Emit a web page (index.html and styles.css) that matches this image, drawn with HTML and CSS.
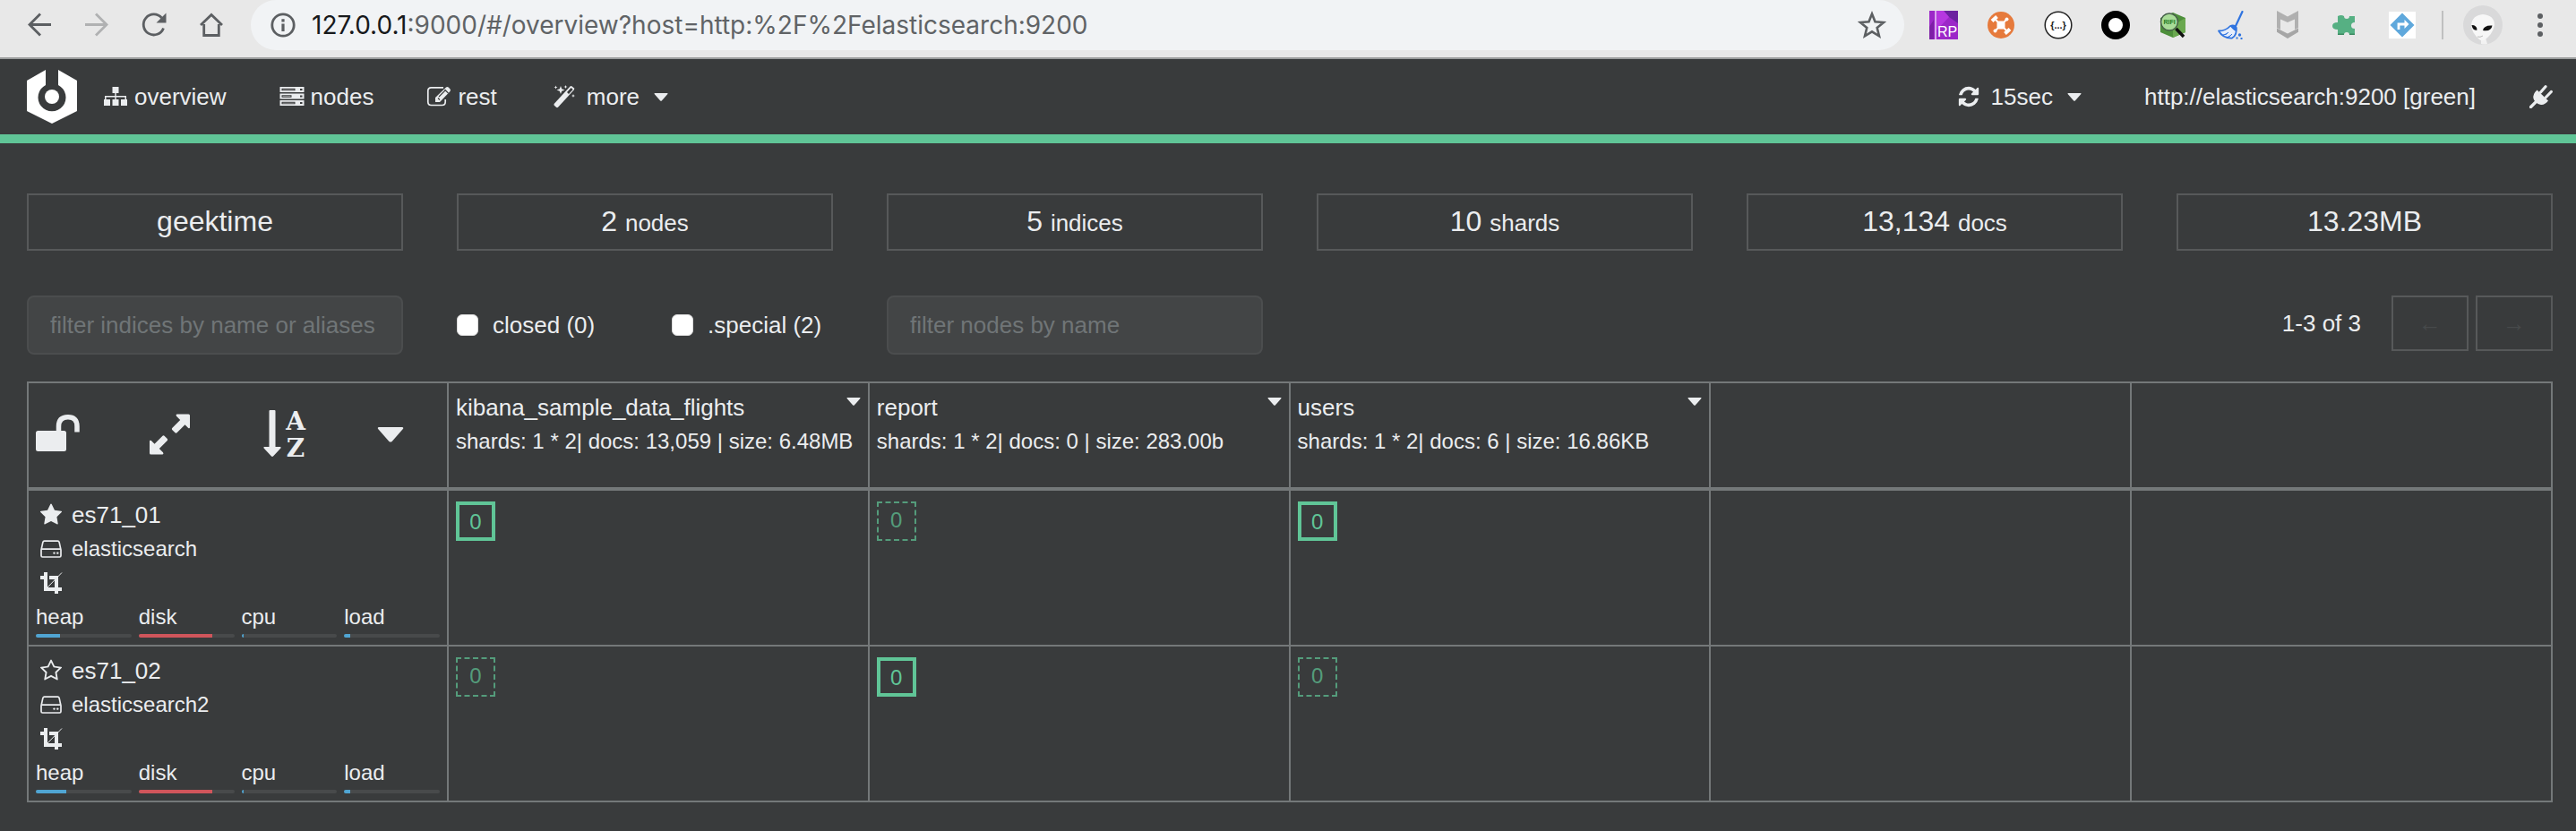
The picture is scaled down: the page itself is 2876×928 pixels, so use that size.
FILE: index.html
```html
<!DOCTYPE html>
<html lang="en">
<head>
<meta charset="utf-8">
<title>cerebro - overview</title>
<link rel="stylesheet" href="styles.css">
</head>
<body>
<svg class="sprite" aria-hidden="true">
  <symbol id="star" viewBox="0 0 1792 1792"><path d="M1728 647q0 22-26 48l-363 354 86 500q1 7 1 20 0 21-10.500 35.500t-30.500 14.500q-19 0-40-12l-449-236-449 236q-22 12-40 12-21 0-31.500-14.500t-10.500-35.500q0-6 2-20l86-500-364-354q-25-27-25-48 0-37 56-46l502-73 225-455q19-41 49-41t49 41l225 455 502 73q56 9 56 46z"/></symbol>
  <symbol id="star-o" viewBox="0 0 1792 1792"><path d="M1201 1004l306-297-422-62-189-382-189 382-422 62 306 297-73 421 378-199 377 199zm527-357q0 22-26 48l-363 354 86 500q1 7 1 20 0 50-41 50-19 0-40-12l-449-236-449 236q-22 12-40 12-21 0-31.500-14.500t-10.500-35.500q0-6 2-20l86-500-364-354q-25-27-25-48 0-37 56-46l502-73 225-455q19-41 49-41t49 41l225 455 502 73q56 9 56 46z"/></symbol>
  <symbol id="hdd" viewBox="0 0 26 26"><path d="M5.500 4.200h15q1.200 0 1.600 1.200L24 14v6.500q0 1.500-1.500 1.500h-19Q2 22 2 20.500V14L3.900 5.400q.4-1.200 1.600-1.200zM2.200 13.200h21.600" fill="none" stroke="currentColor" stroke-width="1.700"/><circle cx="16.500" cy="17.600" r="1.200"/><circle cx="20.300" cy="17.600" r="1.200"/></symbol>
  <symbol id="crop" viewBox="0 0 26 26"><path d="M5 1h4v17h16v4h-4v3h-4v-3H5V9H1V5h4zM11 5h10v13h-4V9h-6z"/><path d="M8 19L25 1.500" stroke="currentColor" stroke-width="1"/></symbol>
  <symbol id="caret" viewBox="0 0 16 9"><path d="M1.200 0h13.600q1.200 0 .6 1L9 8.300q-1 1-2 0L.6 1Q0 0 1.200 0z"/></symbol>
</svg>

<header class="browser">
  <div class="browser-nav">
    <button aria-label="Back"><svg class="i32" viewBox="0 0 32 32"><path d="M29 15.500H5M17 3.500L5 15.500l12 12" class="ln"/></svg></button>
    <button aria-label="Forward" class="faded"><svg class="i32" viewBox="0 0 32 32"><path d="M3 15.500h24M15 3.500l12 12-12 12" class="ln"/></svg></button>
    <button aria-label="Reload"><svg class="i32" viewBox="0 0 32 32"><path d="M26.500 19.500A11.500 11.500 0 1 1 24.500 8" class="ln"/><path d="M29.500 2.500v11h-11z"/></svg></button>
    <button aria-label="Home"><svg class="i32" viewBox="0 0 32 32"><path d="M4 16L16 4.500 28 16M7.700 15v12.500h16.600V15" class="ln"/></svg></button>
  </div>
  <div class="address">
    <svg class="i32" viewBox="0 0 32 32" aria-hidden="true"><circle cx="16" cy="16" r="12.200" class="ln"/><path d="M14.400 14.500h3.200V23h-3.200zM14.400 9.300h3.200v3.200h-3.200z"/></svg>
    <span class="url" role="textbox" contenteditable="true" spellcheck="false" aria-label="Address"><b>127.0.0.1</b>:9000/#/overview?host=http:%2F%2Felasticsearch:9200</span>
    <button aria-label="Bookmark"><svg class="i32" viewBox="0 0 32 32"><path d="M16 3.500l3.500 8.800 9.500.7-7.300 6 2.300 9.300-8-5-8 5 2.300-9.300-7.300-6 9.500-.7z" fill="none" stroke="currentColor" stroke-width="2.600"/></svg></button>
  </div>
  <div class="extensions">
    <svg class="i32" viewBox="0 0 32 32"><path fill="#9c27c8" d="M0 0h32v32H0z"/><path fill="#6c22a0" d="M16 0h16v14L22 7z"/><path fill="#b637e0" d="M8 0h8l6 7-14 15z"/><path fill="#7d1fa6" d="M0 18l5-8v22H0z"/><path fill="#d9a5ee" d="M6 0h2v32H6z"/><text x="9" y="29" class="rp">RP</text></svg>
    <svg class="i32" viewBox="0 0 32 32"><circle cx="16" cy="16" r="15" fill="#e67a3c"/><g stroke="#fff" stroke-linecap="round"><path d="M10 10l12 12M22 10L10 22" stroke-width="2"/><path d="M6 11.500l5.500-5M20.500 25.500l5.500-5" stroke-width="4" stroke-linecap="butt"/></g><circle cx="22.500" cy="9.500" r="2" fill="#fff"/><circle cx="9.500" cy="22.500" r="2" fill="#fff"/><rect x="11.500" y="11.500" width="9" height="9" rx="2.500" fill="#fff"/></svg>
    <svg class="i32" viewBox="0 0 32 32"><circle cx="16" cy="16" r="14.800" fill="#fff" stroke="#222" stroke-width="1.500"/><text x="16" y="20" class="braces">{...}</text></svg>
    <svg class="i32" viewBox="0 0 32 32"><circle cx="16" cy="16" r="12" fill="#fff" stroke="#000" stroke-width="8"/></svg>
    <svg class="i32" viewBox="0 0 32 32"><path d="M16 2l14 6v16l-14 6-14-6V8z" fill="#4d8f3b"/><path d="M16 16l14-8v16l-14 6z" fill="#6aa84f"/><circle cx="12" cy="12.500" r="9.500" fill="#a8dc98" stroke="#47604a" stroke-width="1.500"/><path d="M19.500 20l8.500 9" stroke="#111" stroke-width="3.500"/><text x="12" y="15" class="rifi">RIFI</text></svg>
    <svg class="i32" viewBox="0 0 32 32"><path d="M29.500 1L22 17" stroke="#2f74e0" stroke-width="2.200" stroke-linecap="round"/><path d="M3 22.500q8 0 13-5.500 4-1.500 6.500 1.500Q24 27 18 30.500 8 31 3 22.500z" fill="#e6eefb" stroke="#2f74e0" stroke-width="1.800" stroke-linejoin="round"/><path d="M16 17q4-2 7 1.500 0 3-.5 4-3-1-6.500-5.500zM8 27q4 0 6-3M12 30q4-1 6-4" fill="#2f74e0" stroke="#2f74e0" stroke-width="1"/><circle cx="26.500" cy="27" r="1.700" fill="#2f74e0"/><path d="M22.500 29.500h2v2h-2zM27.500 30h2v2h-2z" fill="#2f74e0"/></svg>
    <svg class="i32" viewBox="0 0 32 32"><path d="M4 0l12 6.500L28 0v19l-4 2V9.500L16 13 8 9.500V21l-4-2z" fill="#b0b0b0"/><path d="M4 19.500l12 6 12-6v4.300L16 31 4 23.800z" fill="#a6a6a6"/></svg>
    <svg class="i32" viewBox="0 0 32 32"><path d="M8 6q4-2 7 0 0 3 3 3t3-3h6v7q-4 0-4 3.500t4 3.500v7h-6q0-3-3-3t-3 3H8v-6q-6 0-6-4t6-4z" fill="#56b083"/><path d="M8 27h7v-1.500H8zM21 27h6v-1.500h-6z" fill="#3d8b62"/></svg>
    <svg class="i32" viewBox="0 0 32 32"><path fill="#fff" d="M1 1h30v30H1z"/><path d="M16 2.500L29.500 16 16 29.500 2.500 16z" fill="#5fa8dc"/><path d="M12 21v-6h8" fill="none" stroke="#fff" stroke-width="2.800"/><path d="M18.500 10l5 5-5 5z" fill="#fff"/></svg>
  </div>
  <span class="divider"></span>
  <button class="profile" aria-label="Profile"><svg viewBox="0 0 44 44"><circle cx="22" cy="22" r="22" fill="#d9d9da"/><path d="M20 36h5l2 7q-4 1-7 0z" fill="#f2f2f2"/><path d="M22 10q13 1 13 12-2 11-12 17-3 1-5-1-9-8-9-16 1-11 13-12z" fill="#f7f7f7"/><path d="M9.500 22q6 0 6 5.500-5 1-6-5.500zM22 28q1-6 10.500-5.500-1 7-10.500 5.500z" fill="#111"/><path d="M16 35q3 1 6-1" fill="none" stroke="#bbb"/></svg></button>
  <button aria-label="Menu"><svg class="i32" viewBox="0 0 32 32"><circle cx="16" cy="6" r="3"/><circle cx="16" cy="16" r="3"/><circle cx="16" cy="26" r="3"/></svg></button>
</header>

<nav class="navbar">
  <a class="logo" href="#" aria-label="cerebro"><svg viewBox="0 0 56 60"><path d="M21 0v17a15.500 15.500 0 1 0 14 0V0l21 12v34L28 60 0 46V12z" fill="#fff"/><circle cx="28" cy="30" r="8" fill="#fff"/></svg></a>
  <a class="item" href="#"><svg viewBox="0 0 34 26"><path d="M13.500 2h7v7h-2.800v3H29v4h1v7h-7v-7h4.500v-2.500h-9.800V16h2.800v7h-7v-7h2.800v-2.500H6.500V16H11v7H4v-7h1v-4h11.300V9h-2.800z"/></svg><span>overview</span></a>
  <a class="item" href="#"><svg viewBox="0 0 34 26"><path d="M3.500 2h27v6h-27zM3.500 9.500h27v6h-27zM3.500 17h27v6h-27z"/><path d="M5.500 3.700h15v2.600h-15zM5.500 11.200h11v2.600h-11zM5.500 18.700h15v2.600h-15z" fill="#393b3c"/><path d="M26 4h2.500v2H26zM26 11.500h2.500v2H26zM26 19h2.500v2H26z" fill="#393b3c"/><path d="M6.500 4.700h13v.8h-13zM6.500 12.200h9v.8h-9zM6.500 19.700h13v.8h-13z" fill="#aaa"/></svg><span>nodes</span></a>
  <a class="item" href="#"><svg viewBox="0 0 34 26"><path d="M22 2.800H8.500Q4.800 2.800 4.800 6.500v12.300q0 3.700 3.700 3.700h12q3.700 0 3.700-3.700V16" fill="none" stroke="currentColor" stroke-width="1.700"/><path d="M13 19v-5L25 2.500q1.500-1 3 .3l1.500 1.600q1 1.400 0 2.600L18 19z"/><path d="M16 14.500l2 2M23.500 5l4 4M17 13l7-7" stroke="#393b3c" stroke-width="1.100"/></svg><span>rest</span></a>
  <button class="item menu more"><svg viewBox="0 0 34 26"><path d="M5.800 20.800L23.500 1.500q1-1 2.200 0l2 1.800q1 1.200 0 2.300L10 24.800q-1 .9-2 0l-2.200-2q-.8-1 0-2z"/><path d="M24.600 3L20 8l2 1.900 4.600-5z" fill="#393b3c"/><path d="M13 1l1.200 3.300L17.500 5.500l-3.300 1.200L13 10l-1.200-3.300L8.500 5.500l3.300-1.200zM7.500.5l.6 1.400 1.400.6-1.400.6-.6 1.400-.6-1.400-1.400-.6 1.400-.6zM18.500 0l.6 1.400 1.400.6-1.400.6-.6 1.400-.6-1.400-1.400-.6 1.400-.6zM27 10l.6 1.400 1.400.6-1.400.6L27 14l-.6-1.400L25 12l1.400-.6z"/></svg><span>more</span><svg class="caret"><use href="#caret"/></svg></button>
  <div class="right">
    <button class="item menu"><svg viewBox="-276 0 2344 1792"><path d="M1639 1056q0 5-1 7-64 268-268 434.500t-478 166.500q-146 0-282.500-55t-243.500-157l-129 129q-19 19-45 19t-45-19-19-45v-448q0-26 19-45t45-19h448q26 0 45 19t19 45-19 45l-137 137q71 66 161 102t187 36q134 0 250-65t186-179q11-17 53-117 8-23 30-23h192q13 0 22.500 9.500t9.500 22.500zm25-800v448q0 26-19 45t-45 19h-448q-26 0-45-19t-19-45 19-45l138-138q-148-137-349-137-134 0-250 65t-186 179q-11 17-53 117-8 23-30 23h-199q-13 0-22.500-9.500t-9.500-22.500v-7q65-268 270-434.500t480-166.500q146 0 284 55.500t245 156.500l130-129q19-19 45-19t45 19 19 45z"/></svg><span>15sec</span><svg class="caret"><use href="#caret"/></svg></button>
    <span>http://elasticsearch:9200 [green]</span>
    <button class="plug" aria-label="Disconnect"><svg viewBox="0 0 26 26"><path d="M1.500 24.500L8 18" stroke="currentColor" stroke-width="3.200" stroke-linecap="round"/><path d="M12.500 8L18 1.800M18.500 13.500L24.300 7.500" stroke="currentColor" stroke-width="3.200" stroke-linecap="round"/><path d="M8.500 5.500L21 17.500q-4.500 5.500-9 4.200-2.500-.3-4.500-2.200-2.500-2-3-4.500Q3.500 10 8.500 5.500z"/></svg></button>
  </div>
</nav>

<main>
  <section class="grid stats">
    <div>geektime</div>
    <div>2 <small>nodes</small></div>
    <div>5 <small>indices</small></div>
    <div>10 <small>shards</small></div>
    <div>13,134 <small>docs</small></div>
    <div>13.23MB</div>
  </section>

  <section class="grid filters">
    <input type="text" placeholder="filter indices by name or aliases" aria-label="filter indices by name or aliases">
    <div class="checks">
      <label><input type="checkbox">closed (0)</label>
      <label><input type="checkbox">.special (2)</label>
    </div>
    <input type="text" placeholder="filter nodes by name" aria-label="filter nodes by name">
    <div class="pager">
      <span>1-3 of 3</span>
      <button disabled>←</button>
      <button disabled>→</button>
    </div>
  </section>

  <table>
    <thead>
      <tr>
        <th class="corner">
          <div class="tools">
            <button aria-label="Unlock"><svg viewBox="0 0 48 54"><rect x="0" y="23" width="34" height="23" rx="2.500"/><path d="M25.500 24v-6q0-10 10.200-10.200T46 18v6.500" fill="none" stroke="currentColor" stroke-width="5.500"/></svg></button>
            <button aria-label="Expand"><svg viewBox="0 0 48 54"><path d="M30.500 4.500h13q1.500 0 1.500 1.500v13q0 2-1.800 1l-3.700-3.700-9 9q-1 .8-2 0l-3.300-3.300q-.8-1 0-2l9-9-4.200-4.200q-1.200-1.800.5-2.300zM14.500 49.500H1.500Q0 49.500 0 48V35q0-2 1.800-1l3.700 3.700 9-9q1-.8 2 0l3.300 3.300q.8 1 0 2l-9 9 4.200 4.200q1.200 1.800-.5 2.300z"/></svg></button>
            <button aria-label="Sort A to Z"><svg viewBox="0 0 48 54"><path d="M6.500 1q0-1 1-1h5q1 0 1 1v40h5.500q1.200.6.400 1.600L11 51.500q-1 .9-2 0L.6 42.600q-.8-1 .4-1.600h5.500z"/><text x="36" y="22" class="az">A</text><text x="36" y="52" class="az">Z</text></svg></button>
            <button class="tri" aria-label="More"><svg class="big-caret"><use href="#caret"/></svg></button>
          </div>
        </th>
        <th><div class="index"><span>kibana_sample_data_flights</span><button aria-label="Index menu"><svg class="caret"><use href="#caret"/></svg></button></div><div class="meta">shards: 1 * 2| docs: 13,059 | size: 6.48MB</div></th>
        <th><div class="index"><span>report</span><button aria-label="Index menu"><svg class="caret"><use href="#caret"/></svg></button></div><div class="meta">shards: 1 * 2| docs: 0 | size: 283.00b</div></th>
        <th><div class="index"><span>users</span><button aria-label="Index menu"><svg class="caret"><use href="#caret"/></svg></button></div><div class="meta">shards: 1 * 2| docs: 6 | size: 16.86KB</div></th>
        <th></th>
        <th></th>
      </tr>
    </thead>
    <tbody>
      <tr>
        <td>
          <div class="line name"><svg><use href="#star"/></svg>es71_01</div>
          <div class="line"><svg><use href="#hdd"/></svg>elasticsearch</div>
          <div class="line"><svg><use href="#crop"/></svg></div>
          <div class="gauges">
            <div>heap<div class="bar"><i style="width:25%"></i></div></div>
            <div>disk<div class="bar"><i class="danger" style="width:77%"></i></div></div>
            <div>cpu<div class="bar"><i style="width:2%"></i></div></div>
            <div>load<div class="bar"><i style="width:6%"></i></div></div>
          </div>
        </td>
        <td class="cell"><div class="shard">0</div></td>
        <td class="cell"><div class="shard replica">0</div></td>
        <td class="cell"><div class="shard">0</div></td>
        <td></td>
        <td></td>
      </tr>
      <tr>
        <td>
          <div class="line name"><svg><use href="#star-o"/></svg>es71_02</div>
          <div class="line"><svg><use href="#hdd"/></svg>elasticsearch2</div>
          <div class="line"><svg><use href="#crop"/></svg></div>
          <div class="gauges">
            <div>heap<div class="bar"><i style="width:32%"></i></div></div>
            <div>disk<div class="bar"><i class="danger" style="width:77%"></i></div></div>
            <div>cpu<div class="bar"><i style="width:2%"></i></div></div>
            <div>load<div class="bar"><i style="width:6%"></i></div></div>
          </div>
        </td>
        <td class="cell"><div class="shard replica">0</div></td>
        <td class="cell"><div class="shard">0</div></td>
        <td class="cell"><div class="shard replica">0</div></td>
        <td></td>
        <td></td>
      </tr>
    </tbody>
  </table>
</main>
</body>
</html>
```

FILE: styles.css
```css
* { box-sizing: border-box; }
body {
  margin: 0;
  background: #393b3c;
  color: #ebedef;
  font: 26px/38px "Liberation Sans", Arial, sans-serif;
}
svg { display: block; fill: currentColor; flex: none; }
button { padding: 0; border: 0; background: none; color: inherit; font: inherit; }
a { color: inherit; text-decoration: none; }
.sprite { display: none; }
.i32 { width: 32px; height: 32px; }
.ln { fill: none; stroke: currentColor; stroke-width: 2.8; }

/* browser toolbar */
.browser {
  display: flex;
  align-items: center;
  height: 66px;
  padding: 0 24px 8px 28px;
  border-bottom: 2px solid #9b9d9d;
  background: #e8e8e8;
  color: #5c5f62;
}
.browser-nav, .extensions { display: flex; gap: 32px; }
.faded { color: #b0b1b2; }
.address {
  display: flex;
  flex: 1;
  align-items: center;
  height: 56px;
  margin: 0 28px;
  padding: 0 20px;
  border-radius: 28px;
  background: #f1f3f5;
}
.url { flex: 1; margin-left: 16px; color: #606366; font: 28px/38px Inter, sans-serif; }
.url b { color: #17191b; font-weight: 400; }
.divider { width: 2px; height: 32px; margin: 0 22px 0 28px; background: #bfc0c0; }
.profile { margin-right: 26px; }
.profile svg { width: 44px; height: 44px; }
.rp { fill: #fff; font: 16px "Liberation Sans", sans-serif; }
.braces { fill: #222; text-anchor: middle; font: bold 11px "Liberation Sans", sans-serif; }
.rifi { fill: #1f7a1f; text-anchor: middle; font: bold 7px "Liberation Sans", sans-serif; }

/* navigation */
.navbar {
  display: flex;
  align-items: center;
  height: 94px;
  padding: 0 26px 0 30px;
  border-bottom: 10px solid #60c597;
}
.logo { margin-right: 26px; }
.logo svg { width: 56px; height: 60px; }
.item { display: flex; align-items: center; gap: 4px; margin-right: 56px; }
.item svg { width: 34px; height: 26px; }
.menu { gap: 8px; }
.more { margin-left: 2px; }
svg.caret, .item svg.caret { width: 16px; height: 9px; }
.item .caret { margin-left: 8px; }
.right { display: flex; align-items: center; margin-left: auto; }
.right .item { margin-right: 70px; }
.plug { margin-left: 60px; }
.plug svg { width: 26px; height: 26px; }

main { padding: 56px 26px 32px 30px; }
.grid { display: grid; grid-template-columns: repeat(6, 1fr); column-gap: 60px; }
.stats div {
  padding-bottom: 2px;
  border: 2px solid #57595a;
  font-size: 32px;
  line-height: 58px;
  text-align: center;
}
.stats small { font-size: 26px; line-height: 26px; }

.filters { margin: 50px 0 30px; align-items: start; }
.filters input[type="text"] {
  width: 100%;
  height: 66px;
  padding: 0 24px;
  border: 2px solid #4b4d4e;
  border-radius: 8px;
  background: #434546;
  color: inherit;
  font: inherit;
}
.filters ::placeholder { color: #707577; opacity: 1; }
.checks { display: flex; align-items: center; height: 66px; white-space: nowrap; }
.checks label { display: flex; align-items: center; gap: 16px; min-width: 240px; }
.checks label + label { min-width: 0; }
.checks input {
  appearance: none;
  width: 24px;
  height: 24px;
  margin: 0;
  border: 1px solid #dcdcdc;
  border-radius: 6px;
  background: #fff;
}
.pager {
  display: flex;
  grid-column: 4 / -1;
  align-items: center;
  justify-content: flex-end;
  gap: 8px;
}
.pager span { margin-right: 26px; }
.pager button { width: 86px; height: 62px; border: 2px solid #57595a; color: #474a4b; }

/* shard table */
table { width: 100%; border-collapse: collapse; table-layout: fixed; }
th, td {
  padding: 8px;
  border: 2px solid #747879;
  font-weight: 400;
  text-align: left;
  vertical-align: top;
}
thead th { height: 119px; border-bottom-width: 4px; }
.corner { width: 469px; }
.tools { display: flex; gap: 79px; padding-top: 22px; }
.tools svg { width: 48px; height: 54px; overflow: visible; }
.tools svg.big-caret { width: 30px; height: 17px; }
.az { text-anchor: middle; font: bold 28px "DejaVu Serif", serif; }
.index { display: flex; justify-content: space-between; align-items: flex-start; }
.index button { padding-top: 8px; }
.meta, td { font-size: 24px; white-space: nowrap; }
.line { display: flex; align-items: center; height: 38px; gap: 10px; padding-left: 4px; }
.line svg { width: 26px; height: 26px; }
.name { font-size: 26px; }
.gauges { display: grid; grid-template-columns: repeat(4, 1fr); column-gap: 8px; }
.bar { height: 4px; border-radius: 2px; background: #484a4b; overflow: hidden; }
.bar i { display: block; height: 4px; background: #50a5d3; }
.bar .danger { background: #d0555b; }
.cell { padding-top: 12px; }
.shard {
  width: 44px;
  height: 44px;
  border: 4px solid #60c597;
  color: #60c597;
  line-height: 38px;
  text-align: center;
}
.replica { border: 2px dashed; opacity: .7; }
```
